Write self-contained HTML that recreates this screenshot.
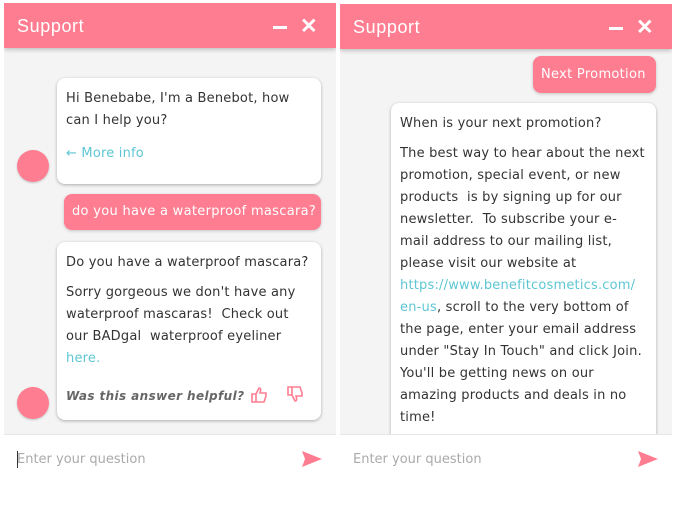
<!DOCTYPE html>
<html><head><style>
*{margin:0;padding:0;box-sizing:border-box}
body{width:680px;height:506px;background:#fff;position:relative;overflow:hidden;font-family:"DejaVu Sans","Liberation Sans",sans-serif;}
.panel{position:absolute;width:332px;background:#f4f4f4;overflow:hidden}
.hdr{position:absolute;left:0;top:0;width:100%;height:45px;background:#ff7d91;box-shadow:0 2px 4px rgba(0,0,0,.2);z-index:2;color:#fff}
.hdr .t{position:absolute;left:13px;top:13px;font-size:18px;letter-spacing:.6px;font-family:"Liberation Sans",sans-serif}
.hdr .min{position:absolute;left:269px;top:23px;width:14px;height:3px;background:#fff}
.hdr .x{position:absolute;left:296px;top:11px;font-size:21px;font-weight:bold;font-family:"Liberation Sans",sans-serif}
.bub{position:absolute;background:#fff;border-radius:8px;box-shadow:0 1px 3px rgba(0,0,0,.3);font-size:13px;color:#333;letter-spacing:.2px;line-height:22px;padding:10px 9px 8px;white-space:nowrap}
.user{position:absolute;background:#ff7d91;color:#fff;border-radius:8px;box-shadow:0 1px 3px rgba(0,0,0,.2);font-size:13px;letter-spacing:.3px;line-height:38px;padding:0 8px;white-space:nowrap}
.av{position:absolute;width:32px;height:32px;border-radius:50%;background:#ff7d91;box-shadow:0 1px 2px rgba(0,0,0,.2)}
.link{color:#5ec6d3}
.inp{position:absolute;left:0;width:100%;height:46px;background:#fff;border-top:1px solid #e6e6e6}
.inp .ph{position:absolute;left:13px;top:17px;font-size:13px;color:#aaa}
.send{position:absolute;right:14px;top:16px}
</style></head><body>

<div class="panel" style="left:4px;top:3px;height:477px">
 <div class="hdr"><span class="t">Support</span><span class="min"></span><span class="x">✕</span></div>
 <div class="bub" style="left:53px;top:75px;width:264px;height:106px">Hi Benebabe, I'm a Benebot, how<br>can I help you?<div class="link" style="margin-top:11px">← More info</div></div>
 <div class="av" style="left:13px;top:147px"></div>
 <div class="user" style="left:60px;top:191px;width:257px;line-height:36px">do you have a waterproof mascara?</div>
 <div class="bub" style="left:53px;top:239px;width:264px;height:178px">Do you have a waterproof mascara?<div style="margin-top:8px">Sorry gorgeous we don't have any<br>waterproof mascaras!&nbsp; Check out<br>our BADgal&nbsp; waterproof eyeliner<br><span class="link">here.</span></div>
  <div style="margin-top:15px;font-style:italic;font-weight:bold;color:#666;font-size:12px;letter-spacing:.4px">Was this answer helpful?
   <svg style="position:absolute;left:193px;bottom:17px" width="18" height="17" viewBox="0 0 18 17"><path d="M2 8h4v8H2z M6 8l3-6c2 0 2 2 1 5h6v3l-2 6H6" fill="none" stroke="#ff7d91" stroke-width="1.6"/></svg>
   <svg style="position:absolute;left:229px;bottom:17px" width="18" height="17" viewBox="0 0 18 17"><path d="M2 1h4v8H2z M6 9l3 6c2 0 2-2 1-5h6V7l-2-6H6" fill="none" stroke="#ff7d91" stroke-width="1.6"/></svg>
  </div></div>
 <div class="av" style="left:13px;top:384px"></div>
 <div class="inp" style="top:431px"><span style="position:absolute;left:13px;top:16px;width:1px;height:17px;background:#333"></span><span class="ph">Enter your question</span>
  <svg class="send" width="20" height="16" viewBox="0 0 20 16"><path d="M0 0L20 8L0 16L3 8Z" fill="#ff7d91"/></svg></div>
</div>

<div class="panel" style="left:340px;top:4px;height:476px">
 <div class="hdr"><span class="t">Support</span><span class="min"></span><span class="x">✕</span></div>
 <div class="user" style="left:193px;top:52px;width:123px;height:37px">Next Promotion</div>
 <div class="bub" style="left:51px;top:99px;width:265px;height:400px">When is your next promotion?<div style="margin-top:8px">The best way to hear about the next<br>promotion, special event, or new<br>products&nbsp; is by signing up for our<br>newsletter.&nbsp; To subscribe your e-<br>mail address to our mailing list,<br>please visit our website at<br><span class="link">https://www.benefitcosmetics.com/<br>en-us</span>, scroll to the very bottom of<br>the page, enter your email address<br>under "Stay In Touch" and click Join.<br>You'll be getting news on our<br>amazing products and deals in no<br>time!</div></div>
 <div class="inp" style="top:430px"><span class="ph">Enter your question</span>
  <svg class="send" width="20" height="16" viewBox="0 0 20 16"><path d="M0 0L20 8L0 16L3 8Z" fill="#ff7d91"/></svg></div>
</div>
</body></html>
